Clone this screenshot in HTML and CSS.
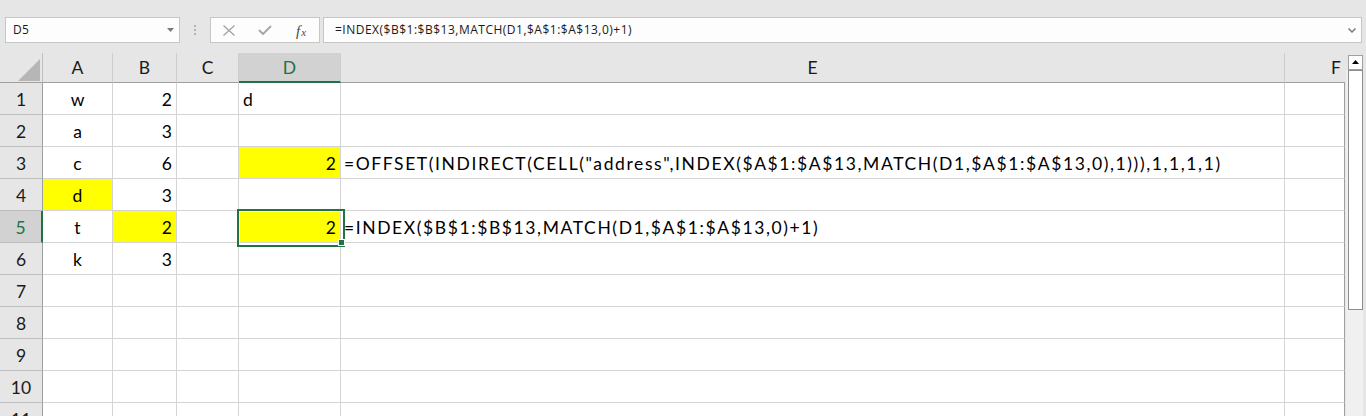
FILE: index.html
```html
<!DOCTYPE html>
<html>
<head>
<meta charset="utf-8">
<link rel="stylesheet" href="styles.css">
</head>
<body>
<div class="app">
  <div class="topbar">
    <div class="namebox">
      <span class="nb-text">D5</span>
      <svg class="nb-arrow" width="7" height="4" viewBox="0 0 7 4"><polygon points="0,0 7,0 3.5,4" fill="#7a7a7a"/></svg>
    </div>
    <div class="sep"><i></i><i></i><i></i></div>
    <div class="fbtns">
      <span class="fbtn"><svg width="12" height="11" viewBox="0 0 12 11"><path d="M0.5 0.5 L11.5 10.5 M11.5 0.5 L0.5 10.5" stroke="#a3a3a3" stroke-width="1.3" fill="none"/></svg></span>
      <span class="fbtn"><svg width="14" height="10" viewBox="0 0 14 10"><polyline points="1,5 5,9 13,1" stroke="#a8a8a8" stroke-width="2" fill="none"/></svg></span>
      <span class="fbtn fx"><span class="fx-f">f</span><span class="fx-x">x</span></span>
    </div>
    <div class="formula">
      <span class="f-text">=INDEX($B$1:$B$13,MATCH(D1,$A$1:$A$13,0)+1)</span>
      <svg class="f-chev" width="8" height="5" viewBox="0 0 8 5"><polyline points="0.5,0.5 4,4 7.5,0.5" stroke="#7a7a7a" stroke-width="1.5" fill="none"/></svg>
    </div>
  </div>
  <div class="sheet">
    <div class="grid">
      <div class="corner"><svg width="22" height="22" viewBox="0 0 22 22"><polygon points="22,0 22,22 0,22" fill="#b6b6b6"/></svg></div>
      <div class="hd">A</div>
      <div class="hd">B</div>
      <div class="hd">C</div>
      <div class="hd hd-sel">D</div>
      <div class="hd">E</div>
      <div class="hd hd-f">F</div>

      <div class="rh">1</div>
      <div class="c ctr">w</div>
      <div class="c r">2</div>
      <div class="c"></div>
      <div class="c">d</div>
      <div class="c"></div>
      <div class="c f"></div>

      <div class="rh">2</div>
      <div class="c ctr">a</div>
      <div class="c r">3</div>
      <div class="c"></div>
      <div class="c"></div>
      <div class="c"></div>
      <div class="c f"></div>

      <div class="rh">3</div>
      <div class="c ctr">c</div>
      <div class="c r">6</div>
      <div class="c"></div>
      <div class="c r y">2</div>
      <div class="c e">=OFFSET(INDIRECT(CELL("address",INDEX($A$1:$A$13,MATCH(D1,$A$1:$A$13,0),1))),1,1,1,1)</div>
      <div class="c f"></div>

      <div class="rh">4</div>
      <div class="c ctr y">d</div>
      <div class="c r">3</div>
      <div class="c"></div>
      <div class="c"></div>
      <div class="c"></div>
      <div class="c f"></div>

      <div class="rh rh-sel">5</div>
      <div class="c ctr">t</div>
      <div class="c r y">2</div>
      <div class="c"></div>
      <div class="c r y sel">2<span class="handle"></span></div>
      <div class="c e">=INDEX($B$1:$B$13,MATCH(D1,$A$1:$A$13,0)+1)</div>
      <div class="c f"></div>

      <div class="rh">6</div>
      <div class="c ctr">k</div>
      <div class="c r">3</div>
      <div class="c"></div>
      <div class="c"></div>
      <div class="c"></div>
      <div class="c f"></div>

      <div class="rh">7</div>
      <div class="c"></div><div class="c"></div><div class="c"></div><div class="c"></div><div class="c"></div><div class="c f"></div>
      <div class="rh">8</div>
      <div class="c"></div><div class="c"></div><div class="c"></div><div class="c"></div><div class="c"></div><div class="c f"></div>
      <div class="rh">9</div>
      <div class="c"></div><div class="c"></div><div class="c"></div><div class="c"></div><div class="c"></div><div class="c f"></div>
      <div class="rh">10</div>
      <div class="c"></div><div class="c"></div><div class="c"></div><div class="c"></div><div class="c"></div><div class="c f"></div>
      <div class="rh">11</div>
      <div class="c"></div><div class="c"></div><div class="c"></div><div class="c"></div><div class="c"></div><div class="c f"></div>
    </div>
    <div class="vscroll">
      <div class="sb-up"><svg width="7" height="4" viewBox="0 0 7 4"><polygon points="0,4 7,4 3.5,0" fill="#000"/></svg></div>
      <div class="sb-track"><div class="sb-thumb"></div></div>
    </div>
  </div>
</div>
</body>
</html>
```
FILE: styles.css
```css
* { box-sizing: border-box; }
html, body { margin: 0; padding: 0; }
body {
  width: 1366px;
  height: 416px;
  overflow: hidden;
  background: #e6e6e6;
  font-family: Lato, "Liberation Sans", sans-serif;
}
.app { display: flex; flex-direction: column; height: 416px; }

/* top formula bar */
.topbar {
  display: flex;
  align-items: stretch;
  height: 53px;
  padding: 17px 4px 10px 5px;
  font-family: "Open Sans", "Noto Sans", sans-serif;
  font-size: 12px;
  color: #1a1a1a;
}
.namebox {
  width: 175px;
  border: 1px solid #c6c6c6;
  background: #fdfdfd;
  display: flex;
  align-items: center;
  justify-content: space-between;
  padding: 0 5px 0 7px;
}
.nb-text { line-height: 16px; letter-spacing: 0.3px; }
.sep {
  width: 30px;
  display: flex;
  flex-direction: column;
  justify-content: center;
  gap: 2px;
  padding-left: 14px;
}
.sep i { display: block; width: 2px; height: 2px; background: #b3b3b3; }
.fbtns {
  width: 110px;
  border: 1px solid #c6c6c6;
  background: #fdfdfd;
  display: flex;
}
.fbtn {
  width: 36px;
  display: flex;
  align-items: center;
  justify-content: center;
}
.fx {
  font-family: "Liberation Serif", "DejaVu Serif", serif;
  font-style: italic;
  color: #4a4a4a;
  align-items: baseline;
  padding-top: 3px;
}
.fx-f { font-size: 15px; line-height: 20px; }
.fx-x { font-size: 11px; line-height: 20px; margin-left: 1px; }
.formula {
  flex: 1;
  margin-left: 3px;
  border: 1px solid #c6c6c6;
  background: #fdfdfd;
  display: flex;
  align-items: center;
  justify-content: space-between;
  padding: 0 5px 0 11px;
}
.f-text { line-height: 16px; white-space: nowrap; letter-spacing: 0.5px; }

/* sheet */
.sheet { display: flex; flex: 1; min-height: 0; }
.grid {
  display: grid;
  grid-template-columns: 43px 70px 64px 62px 102px 944px 60px;
  grid-template-rows: 30px;
  grid-auto-rows: 32px;
  width: 1345px;
  overflow: hidden;
  font-size: 17.5px;
  line-height: 21px;
  color: #000;
}
.corner {
  background: #e6e6e6;
  border-right: 1px solid #c0c0c0;
  border-bottom: 1px solid #9f9f9f;
  display: flex;
  align-items: flex-end;
  justify-content: flex-end;
  padding: 0 2px 1px 0;
}
.corner svg { display: block; }
.hd {
  background: #e6e6e6;
  border-right: 1px solid #cdcdcd;
  border-bottom: 1px solid #9f9f9f;
  display: flex;
  align-items: flex-end;
  justify-content: center;
  padding-bottom: 4px;
  color: #1a1a1a;
}
.hd-sel {
  background: #d2d2d2;
  color: #217346;
  border-bottom: 2px solid #217346;
  padding-bottom: 3px;
}
.hd-f { justify-content: flex-start; padding-left: 46px; border-right: none; }
.rh {
  background: #e6e6e6;
  border-right: 1px solid #9f9f9f;
  border-bottom: 1px solid #bdbdbd;
  display: flex;
  align-items: flex-end;
  justify-content: center;
  padding-bottom: 4px;
  color: #1a1a1a;
}
.rh-sel {
  background: #d2d2d2;
  color: #217346;
  border-right: 2px solid #217346;
}
.c {
  background: #fff;
  border-right: 1px solid #d4d4d4;
  border-bottom: 1px solid #d4d4d4;
  display: flex;
  align-items: flex-end;
  padding: 0 4px 4px 4px;
  white-space: nowrap;
}
.ctr { justify-content: center; }
.r { justify-content: flex-end; padding-right: 4px; }
.e { padding-left: 3px; letter-spacing: 1.6px; }
.f { border-right: 1px solid #9f9f9f; }
.y { background: #ffff00; }
.sel { position: relative; }
.sel::after {
  content: "";
  position: absolute;
  left: -2px;
  top: -2px;
  width: 104px;
  height: 34px;
  border: 2px solid #217346;
  box-shadow: inset 0 0 0 1px #fff;
  pointer-events: none;
}
.handle {
  position: absolute;
  left: 99px;
  top: 28px;
  width: 7px;
  height: 7px;
  background: #217346;
  border: 1px solid #fff;
  z-index: 2;
}

/* vertical scrollbar */
.vscroll {
  width: 21px;
  background: #e6e6e6;
  display: flex;
  flex-direction: column;
  padding: 2px 0 0 1px;
}
.sb-up {
  width: 15px;
  height: 15px;
  margin-left: 2px;
  border: 1px solid #a0a0a0;
  background: #fdfdfd;
  display: flex;
  align-items: center;
  justify-content: center;
}
.sb-up svg { display: block; margin-top: -1px; }
.sb-track {
  flex: 1;
  width: 17px;
  background: #f0f0f0;
  padding-left: 2px;
}
.sb-thumb {
  width: 15px;
  height: 240px;
  border: 1px solid #8d8d8d;
  background: #fff;
}
```
